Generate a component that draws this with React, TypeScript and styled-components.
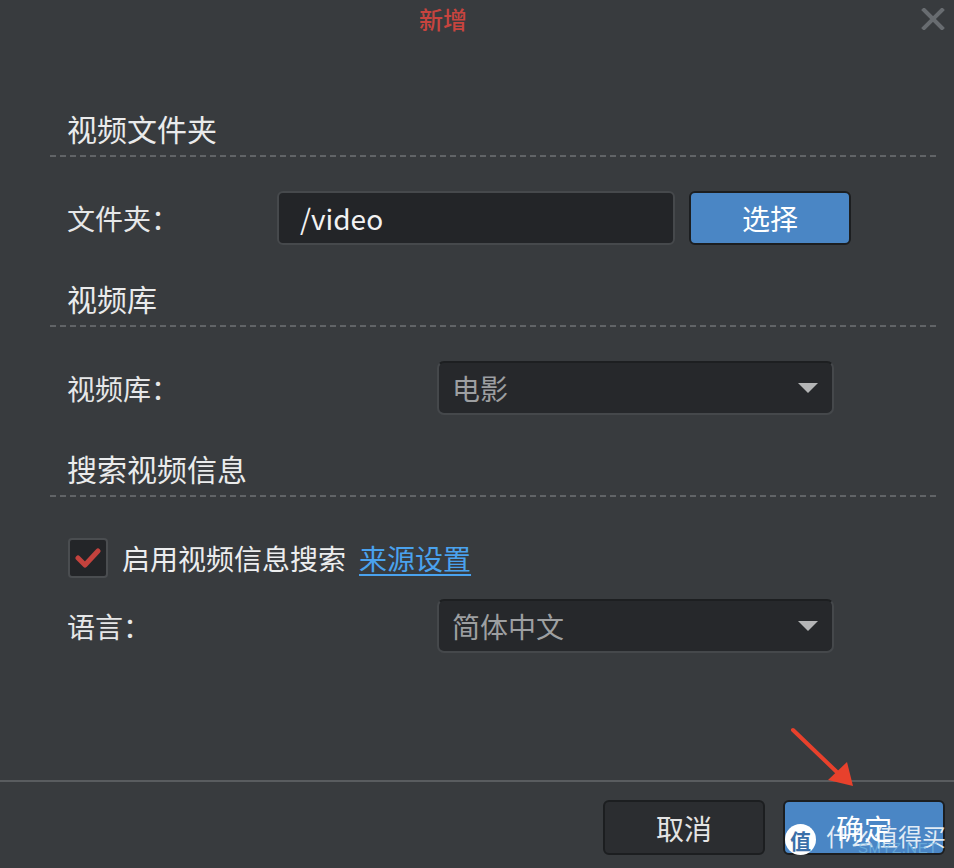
import React from "react";
import styled, { createGlobalStyle } from "styled-components";

const Global = createGlobalStyle`
  html, body { margin: 0; padding: 0; background: #383b3e; }
  body { font-family: "Noto Sans CJK SC", "Noto Sans", sans-serif; }
  * { box-sizing: border-box; }
`;

const Dialog = styled.div`
  position: relative;
  width: 954px;
  height: 868px;
  background: #383b3e;
  display: flex;
  flex-direction: column;
  overflow: hidden;
`;

const Header = styled.div`
  position: relative;
  height: 38px;
  display: flex;
  align-items: center;
  justify-content: center;
`;

const Title = styled.div`
  color: #c8443e;
  font-size: 24px;
  line-height: 36px;
  font-weight: 500;
  margin-left: -68px;
`;

const Close = styled.svg`
  position: absolute;
  right: 9px;
  top: 8px;
`;

const Body = styled.div`
  flex: 1;
  padding: 70px 16px 0 50px;
  display: flex;
  flex-direction: column;
`;

const Heading = styled.div<{ $mt: number }>`
  margin-top: ${(p) => p.$mt}px;
  padding: 0 0 9px 17px;
  font-size: 30px;
  line-height: 40px;
  font-weight: 400;
  color: #eaebec;
  background-image: repeating-linear-gradient(
    to right,
    #616467 0 6px,
    transparent 6px 10px
  );
  background-size: 100% 2px;
  background-position: left bottom;
  background-repeat: no-repeat;
`;

const Row = styled.div<{ $mt: number }>`
  margin-top: ${(p) => p.$mt}px;
  height: 54px;
  display: flex;
  align-items: center;
  padding-left: 17px;
`;

const Label = styled.div<{ $w: number }>`
  width: ${(p) => p.$w}px;
  flex: none;
  font-size: 28px;
  color: #e6e7e8;
`;

const Input = styled.div`
  width: 398px;
  height: 54px;
  background: #232528;
  border: 2px solid #46494c;
  border-radius: 6px;
  padding-left: 21px;
  display: flex;
  align-items: center;
  font-size: 28px;
  color: #f2f2f2;
`;

const Button = styled.div<{ $primary?: boolean }>`
  width: 162px;
  height: 55px;
  flex: none;
  display: flex;
  align-items: center;
  justify-content: center;
  border: 2px solid #1c1e20;
  border-radius: 6px;
  background: ${(p) => (p.$primary ? "#4a86c5" : "#2b2d30")};
  color: ${(p) => (p.$primary ? "#ffffff" : "#e4e4e4")};
  font-size: 28px;
`;

const SelectBtn = styled(Button)`
  margin-left: 14px;
  height: 54px;
`;

const Select = styled.div`
  width: 397px;
  height: 54px;
  background: #26282b;
  border: 2px solid #45484b;
  border-top-color: #1d1f21;
  border-radius: 7px;
  padding: 0 14px 0 13px;
  display: flex;
  align-items: center;
  justify-content: space-between;
  font-size: 28px;
  color: #9d9fa1;
`;

const Caret = styled.div`
  width: 0;
  height: 0;
  border-left: 10px solid transparent;
  border-right: 10px solid transparent;
  border-top: 10px solid #b4b5b6;
`;

const Check = styled.div`
  width: 40px;
  height: 40px;
  border: 2px solid #4a4d50;
  border-radius: 4px;
  background: #232528;
  display: flex;
  align-items: center;
  justify-content: center;
  flex: none;
  margin-left: 1px;
`;

const CheckText = styled.div`
  margin-left: 14px;
  font-size: 28px;
  color: #ecedee;
`;

const Link = styled.a`
  margin-left: 13px;
  font-size: 28px;
  color: #4aa2ee;
  text-decoration: underline;
  text-underline-offset: 4px;
  text-decoration-thickness: 2px;
`;

const Footer = styled.div`
  height: 88px;
  border-top: 2px solid #595c5f;
  display: flex;
  justify-content: flex-end;
  align-items: flex-start;
  gap: 18px;
  padding: 18px 9px 0 0;
`;

const Arrow = styled.svg`
  position: absolute;
  left: 0;
  top: 0;
  pointer-events: none;
`;

const Watermark = styled.div`
  position: absolute;
  left: 785px;
  top: 824px;
  display: flex;
  align-items: center;
  gap: 10px;
  pointer-events: none;
`;

const WmCircle = styled.div`
  width: 31px;
  height: 31px;
  border-radius: 50%;
  background: #ffffff;
  color: #3b6fa8;
  font-size: 21px;
  font-weight: 700;
  display: flex;
  align-items: center;
  justify-content: center;
`;

const WmText = styled.div`
  display: flex;
  flex-direction: column;
  line-height: 1;
`;

const WmMain = styled.span`
  font-size: 24px;
  color: rgba(255, 255, 255, 0.85);
`;

const WmSub = styled.span`
  margin: -8px 0 0 32px;
  font-family: "Liberation Sans", sans-serif;
  font-size: 15px;
  color: rgba(120, 190, 230, 0.6);
  letter-spacing: 0.5px;
`;

export default function App() {
  return (
    <Dialog>
      <Global />
      <Header>
        <Title>新增</Title>
        <Close width="24" height="22" viewBox="0 0 24 22">
          <path d="M3 2 L21 20 M21 2 L3 20" stroke="#686c70" strokeWidth="4" strokeLinecap="square" />
        </Close>
      </Header>
      <Body>
        <Heading $mt={0}>视频文件夹</Heading>
        <Row $mt={34}>
          <Label $w={210}>文件夹：</Label>
          <Input>/video</Input>
          <SelectBtn $primary>选择</SelectBtn>
        </Row>
        <Heading $mt={33}>视频库</Heading>
        <Row $mt={34}>
          <Label $w={370}>视频库：</Label>
          <Select>
            <span>电影</span>
            <Caret />
          </Select>
        </Row>
        <Heading $mt={33}>搜索视频信息</Heading>
        <Row $mt={34}>
          <Check>
            <svg width="26" height="22" viewBox="0 0 26 22">
              <path d="M3 11 L10 18 L23 4" fill="none" stroke="#c4423d" strokeWidth="5" strokeLinecap="round" strokeLinejoin="round" />
            </svg>
          </Check>
          <CheckText>启用视频信息搜索</CheckText>
          <Link>来源设置</Link>
        </Row>
        <Row $mt={14}>
          <Label $w={370}>语言：</Label>
          <Select>
            <span>简体中文</span>
            <Caret />
          </Select>
        </Row>
      </Body>
      <Footer>
        <Button>取消</Button>
        <Button $primary>确定</Button>
      </Footer>
      <Arrow width="954" height="868">
        <line x1="793" y1="730" x2="840" y2="775" stroke="#e8412c" strokeWidth="4" strokeLinecap="round" />
        <polygon points="853,786 828,780 847,762" fill="#e8412c" />
      </Arrow>
      <Watermark>
        <WmCircle>值</WmCircle>
        <WmText>
          <WmMain>什么值得买</WmMain>
          <WmSub>SMYZ.NET</WmSub>
        </WmText>
      </Watermark>
    </Dialog>
  );
}
